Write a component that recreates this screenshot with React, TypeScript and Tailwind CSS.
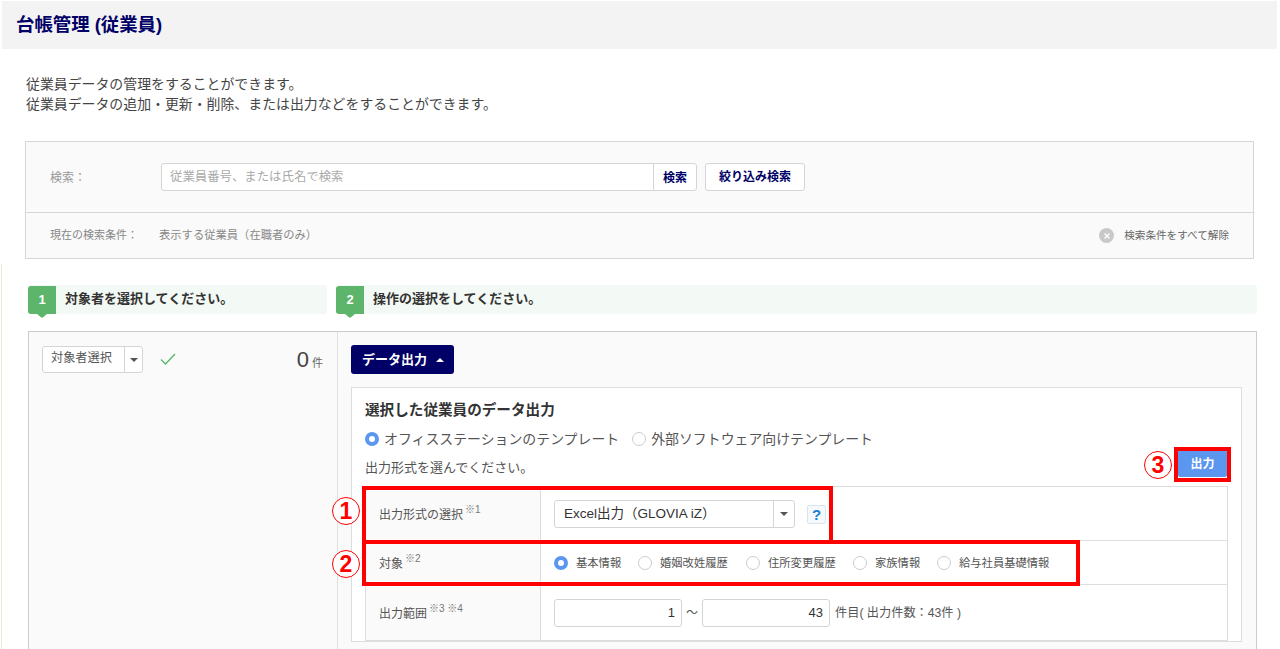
import React from "react";

const font = { fontFamily: '"Liberation Sans", "Noto Sans CJK JP", sans-serif' };

function Radio({ on, className = "" }: { on?: boolean; className?: string }) {
  return on ? (
    <span className={"flex h-[14px] w-[14px] shrink-0 items-center justify-center rounded-full bg-[#5b97ee] " + className}>
      <span className="h-[6px] w-[6px] rounded-full bg-white" />
    </span>
  ) : (
    <span className={"block h-[14px] w-[14px] shrink-0 rounded-full border border-[#ccc] bg-white " + className} />
  );
}

function Caret({ up }: { up?: boolean }) {
  return (
    <svg width="8" height="4" viewBox="0 0 8 4" className="shrink-0">
      <path d={up ? "M0 4 L4 0 L8 4 Z" : "M0 0 L8 0 L4 4 Z"} fill={up ? "#fff" : "#555"} />
    </svg>
  );
}

function StepBar({ n, text, className }: { n: string; text: string; className: string }) {
  return (
    <div className={"relative flex h-[29px] items-center rounded-[3px] bg-[#f3f9f4] " + className}>
      <div className="relative flex h-[28px] w-[28px] items-center justify-center rounded-l-[3px] bg-[#5cb56a] text-[13px] font-bold text-white">
        {n}
        <span className="absolute left-[9px] top-[28px] h-0 w-0 border-x-[5px] border-t-[4px] border-x-transparent border-t-[#5cb56a]" />
      </div>
      <span className="ml-[9px] pb-[2px] text-[13px] font-bold text-[#333]">{text}</span>
    </div>
  );
}

function Row({ label, note, children }: { label: string; note: string; children: React.ReactNode }) {
  return (
    <div className="flex h-full">
      <div className="flex w-[175px] shrink-0 items-center border-r border-[#ddd] bg-[#fafafa] pl-[13px] pt-[2px] text-[12px] text-[#555]">
        <span>{label}</span>
        <sup className="relative -top-[5px] ml-[2px] text-[10px] text-[#777]">{note}</sup>
      </div>
      <div className="flex flex-1 items-center pl-[13px] pt-[1px]">{children}</div>
    </div>
  );
}

function Opt({ label, on, w }: { label: string; on?: boolean; w: string }) {
  return (
    <div className={"flex items-center " + w}>
      <Radio on={on} />
      <span className="ml-[8px] text-[11.3px] text-[#555]">{label}</span>
    </div>
  );
}

function Mark({ n, className }: { n: string; className: string }) {
  return (
    <span className={"absolute flex h-[28px] w-[28px] items-center justify-center rounded-full border border-[#ff0000] bg-white text-[23px] font-bold leading-none text-[#ff0000] " + className}>
      {n}
    </span>
  );
}

export default function App() {
  return (
    <div style={font} className="relative flex h-[649px] w-[1280px] flex-col overflow-hidden bg-white">
      <div className="ml-[2px] mr-[3px] mt-[1px] flex h-[48px] shrink-0 items-center bg-[#f3f3f3] pb-[1px] pl-[14px] text-[18.4px] font-bold text-[#000066]">
        台帳管理 (従業員)
      </div>

      <div className="ml-[26px] mt-[25px] text-[13.9px] leading-[20px] text-[#444]">
        <p>従業員データの管理をすることができます。</p>
        <p>従業員データの追加・更新・削除、または出力などをすることができます。</p>
      </div>

      <div className="ml-[25px] mt-[27px] w-[1229px] shrink-0 border border-[#d6d6d6] bg-[#fafafa]">
        <div className="flex h-[71px] items-center border-b border-[#d6d6d6] pl-[24px]">
          <span className="w-[111px] pt-[1px] text-[12px] text-[#999]">検索：</span>
          <div className="flex h-[28px] w-[536px] items-center rounded-[3px] border border-[#d5d5d5] bg-white">
            <span className="flex-1 pl-[8px] pt-[1px] text-[12.4px] text-[#aaa]">従業員番号、または氏名で検索</span>
            <span className="flex h-full w-[43px] items-center justify-center border-l border-[#d5d5d5] pt-[1px] text-[12px] font-bold text-[#000066]">検索</span>
          </div>
          <span className="ml-[8px] flex h-[28px] w-[100px] items-center justify-center rounded-[3px] border border-[#d5d5d5] bg-white text-[12px] font-bold text-[#000066]">絞り込み検索</span>
        </div>
        <div className="flex h-[45px] items-center pl-[24px] pr-[24px] text-[11px] text-[#888]">
          <span className="w-[109px]">現在の検索条件：</span>
          <span className="text-[11.3px]">表示する従業員（在職者のみ）</span>
          <span className="ml-auto flex h-[15px] w-[15px] items-center justify-center rounded-full bg-[#c8c8c8]">
            <svg width="6" height="6" viewBox="0 0 6 6"><path d="M0.5 0.5 L5.5 5.5 M5.5 0.5 L0.5 5.5" stroke="#fff" strokeWidth="1.3" /></svg>
          </span>
          <span className="ml-[10px] text-[10.6px] text-[#666]">検索条件をすべて解除</span>
        </div>
      </div>

      <div className="ml-[28px] mt-[26px] flex w-[1229px] shrink-0 gap-[9px]">
        <StepBar n="1" text="対象者を選択してください。" className="w-[299px]" />
        <StepBar n="2" text="操作の選択をしてください。" className="flex-1" />
      </div>

      <div className="ml-[28px] mt-[17px] flex w-[1229px] shrink-0 border border-[#ccc] bg-[#fafafa]">
        <div className="flex h-[400px] w-[309px] shrink-0 items-start border-r border-[#e0e0e0] pl-[13px] pr-[3px] pt-[14px]">
          <div className="flex h-[27px] w-[101px] items-center rounded-[3px] border border-[#d5d5d5] bg-white">
            <span className="w-[81px] pb-[2px] pl-[8px] text-[12.2px] text-[#555]">対象者選択</span>
            <span className="flex h-full flex-1 items-center justify-center border-l border-[#d5d5d5]"><Caret /></span>
          </div>
          <svg width="16" height="12" viewBox="0 0 16 12" className="ml-[17px] mt-[7px]"><path d="M1 6.5 L5.5 11 L15 1" fill="none" stroke="#5cb56a" strokeWidth="1.4" /></svg>
          <div className="ml-auto flex items-baseline pr-[11px] text-[#444]">
            <span className="text-[22px] leading-[27px]">0</span>
            <span className="ml-[3px] text-[11px] text-[#666]">件</span>
          </div>
        </div>

        <div className="flex-1 pl-[13px] pr-[14px] pt-[13px]">
          <div className="flex h-[29px] w-[103px] items-center justify-center gap-[9px] rounded-[3px] bg-[#000066] pl-[1px] text-[13px] font-bold text-white">
            データ出力
            <Caret up />
          </div>
          <div className="mt-[13px] border border-[#ddd] bg-white px-[13px] pt-[12px]">
            <div className="text-[14.6px] font-bold leading-[20px] text-[#333]">選択した従業員のデータ出力</div>
            <div className="mt-[9px] flex h-[20px] items-center text-[13.9px] text-[#555]">
              <Radio on />
              <span className="ml-[5px]">オフィスステーションのテンプレート</span>
              <Radio className="ml-[13px]" />
              <span className="ml-[5px]">外部ソフトウェア向けテンプレート</span>
            </div>
            <div className="mt-[1px] flex h-[36px] items-start justify-between">
              <span className="mt-[8px] text-[13px] text-[#555]">出力形式を選んでください。</span>
              <span className="mr-[1px] flex h-[27px] w-[49px] items-center justify-center rounded-[2px] bg-[#5b97ee] text-[12px] font-bold text-white">出力</span>
            </div>
            <div className="grid grid-rows-[54px_44px_55px] divide-y divide-[#ddd] border border-[#ddd]">
              <Row label="出力形式の選択" note="※1">
                <div className="flex h-[28px] w-[241px] items-center rounded-[3px] border border-[#d5d5d5] bg-white">
                  <span className="flex-1 pl-[9px] text-[13.5px] text-[#333]">Excel出力（GLOVIA iZ）</span>
                  <span className="flex h-full w-[21px] items-center justify-center border-l border-[#d5d5d5]"><Caret /></span>
                </div>
                <span className="ml-[12px] flex h-[19px] w-[19px] items-center justify-center rounded-[2px] border border-[#d8e4ee] bg-[#f5f9fc] text-[15px] font-bold leading-none text-[#1a7fd0]">?</span>
              </Row>
              <Row label="対象" note="※2">
                <Opt label="基本情報" on w="w-[84px]" />
                <Opt label="婚姻改姓履歴" w="w-[108px]" />
                <Opt label="住所変更履歴" w="w-[107px]" />
                <Opt label="家族情報" w="w-[84px]" />
                <Opt label="給与社員基礎情報" w="w-[130px]" />
              </Row>
              <Row label="出力範囲" note="※3 ※4">
                <span className="flex h-[28px] w-[128px] items-center justify-end rounded-[3px] border border-[#d5d5d5] bg-white pr-[6px] text-[13px] text-[#333]">1</span>
                <span className="mx-[4px] text-[12px] text-[#555]">～</span>
                <span className="flex h-[28px] w-[128px] items-center justify-end rounded-[3px] border border-[#d5d5d5] bg-white pr-[6px] text-[13px] text-[#333]">43</span>
                <span className="ml-[5px] text-[12.2px] text-[#555]">件目( 出力件数：43件 )</span>
              </Row>
            </div>
          </div>
        </div>
      </div>

      {/* annotation overlays */}
      <div className="absolute left-[1px] top-[264px] h-[385px] w-px bg-[#eee8dc]" />
      <div className="absolute left-[362px] top-[486px] h-[58px] w-[471px] border-[4px] border-[#ff0000]" />
      <div className="absolute left-[362px] top-[540px] h-[46px] w-[718px] border-[4px] border-[#ff0000]" />
      <div className="absolute left-[1174px] top-[447px] h-[35px] w-[57px] border-[4px] border-[#ff0000]" />
      <Mark n="1" className="left-[332px] top-[497px]" />
      <Mark n="2" className="left-[332px] top-[550px]" />
      <Mark n="3" className="left-[1144px] top-[451px]" />
    </div>
  );
}
